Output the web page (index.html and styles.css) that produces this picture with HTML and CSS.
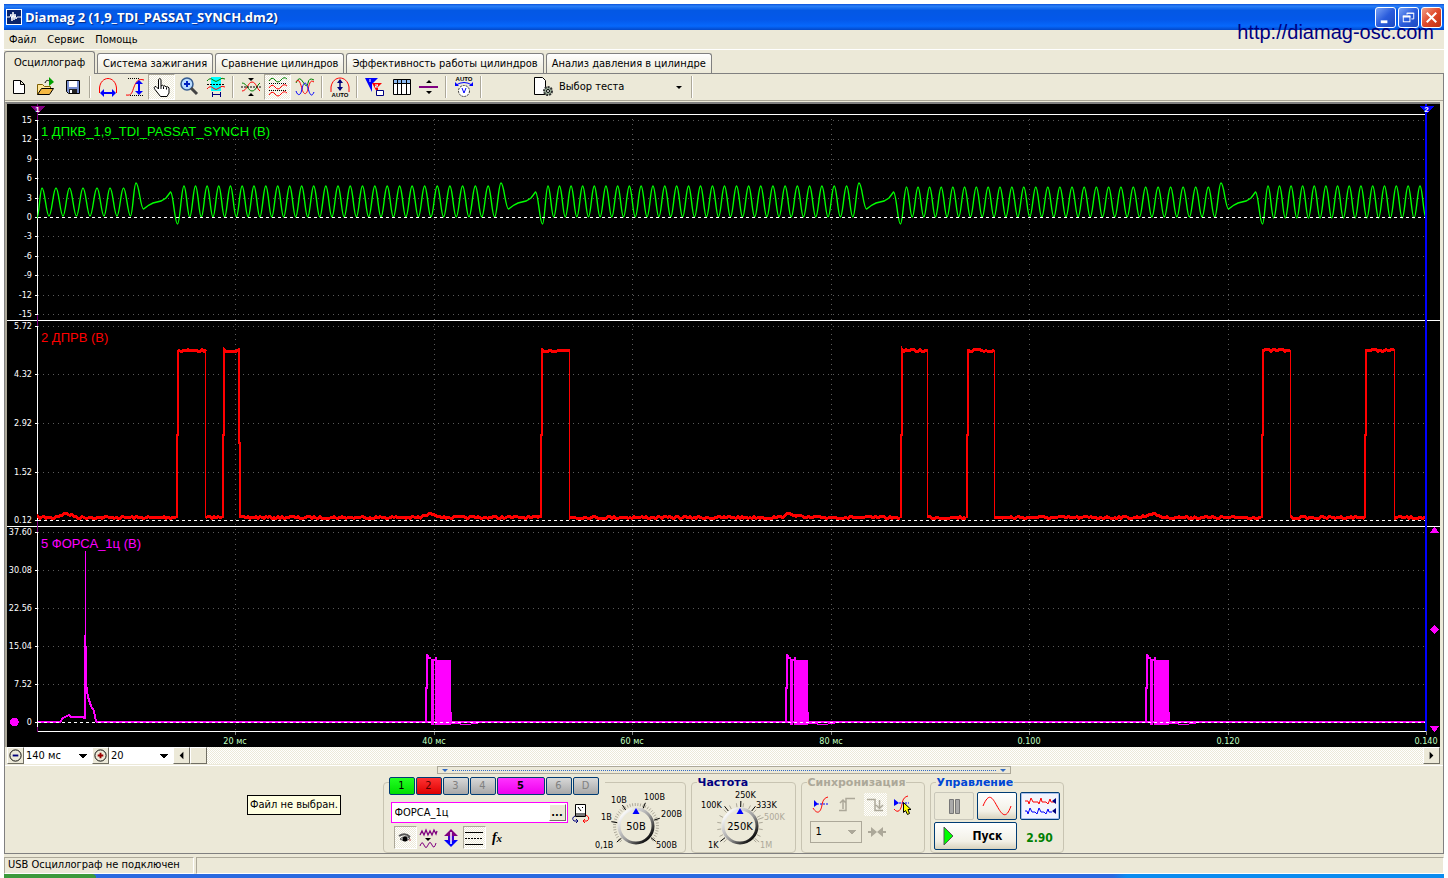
FILE: index.html
```html
<!DOCTYPE html>
<html lang="ru">
<head>
<meta charset="utf-8">
<title>Diamag 2</title>
<link rel="stylesheet" href="styles.css">
</head>
<body>
<div class="window">
  <header class="titlebar">
    <svg class="app-icon" viewBox="0 0 16 16"><rect width="16" height="16" fill="#fff"/><rect x="1" y="1" width="14" height="14" fill="#0a246a"/><path d="M1 8h3l1-3 1 7 1-9 1 8 1-6 1 5 1-2h4" fill="none" stroke="#fff"/></svg>
    <h1 class="title">Diamag 2 (1,9_TDI_PASSAT_SYNCH.dm2)</h1>
    <div class="caption-buttons">
      <button class="cap" aria-label="Свернуть"><svg viewBox="0 0 20 20"><path d="M5 14.5h7" stroke="#fff" stroke-width="3"/></svg></button>
      <button class="cap" aria-label="Развернуть"><svg viewBox="0 0 20 20" fill="none" stroke="#fff"><path d="M8.500 7V5.500h7v6H13M8 5.500h8"/><rect x="4.500" y="8.500" width="7" height="6"/><path d="M4 9h8" stroke-width="2"/></svg></button>
      <button class="cap cap-close" aria-label="Закрыть"><svg viewBox="0 0 20 20"><path d="M5 5l10 10M15 5L5 15" stroke="#fff" stroke-width="2.200"/></svg></button>
    </div>
    <a class="site" href="#">http://diamag-osc.com</a>
  </header>

  <nav class="menubar">
    <button>Файл</button><button>Сервис</button><button>Помощь</button>
  </nav>

  <div class="tabs" role="tablist">
    <button class="tab active" role="tab" aria-selected="true">Осциллограф</button>
    <button class="tab" role="tab">Система зажигания</button>
    <button class="tab" role="tab">Сравнение цилиндров</button>
    <button class="tab" role="tab">Эффективность работы цилиндров</button>
    <button class="tab" role="tab">Анализ давления в цилиндре</button>
  </div>

  <main class="page">
    <div class="toolbar">
      <button class="tool" aria-label="Новый"><svg viewBox="0 0 20 20"><path d="M4.500 3.500h7l4 4v9h-11zM11.500 3.500v4h4" fill="#fff" stroke="#000"/></svg></button>
      <button class="tool" aria-label="Открыть"><svg viewBox="0 0 20 20"><path d="M1.500 17.500v-10h5l2 2h6v3" fill="#ffe79a" stroke="#806000"/><path d="M1.500 17.500l4-6h12l-4 6z" fill="#f5b942" stroke="#000"/><path d="M9 6c1-3 3-3 4-2" fill="none" stroke="#000"/><path d="M13 0l5 5-5 4z" fill="#00a000"/></svg></button>
      <button class="tool" aria-label="Сохранить"><svg viewBox="0 0 20 20"><path d="M3.500 3.500h13v13h-11l-2-2z" fill="#7a8fd0" stroke="#000"/><path d="M6 4h8v6H6z" fill="#fff"/><path d="M6 12h8v4H6z" fill="#222"/><path d="M7 13h2v3H7z" fill="#fff"/></svg></button>
      <span class="sep"></span>
      <button class="tool" aria-label="Период"><svg viewBox="0 0 20 20" fill="none"><path d="M1.500 16V11C2 5 6 1.500 10 1.500S18 5 18.500 11v5" stroke="red"/><path d="M4 16h12" stroke="#00f" stroke-width="2"/><path d="M6 12v8l-4-4zM14 12v8l4-4z" fill="#00f"/></svg></button>
      <button class="tool" aria-label="Амплитуда"><svg viewBox="0 0 20 20" fill="none"><path d="M1 18c6 1 6-3 8-8s4-9 10-7" stroke="red"/><path d="M3 1.500h12M5 18.500h13" stroke="#000" stroke-dasharray="1 1"/><path d="M14 5v11" stroke="#00f" stroke-width="2"/><path d="M10 7h8l-4-4zM10 14h8l-4 4z" fill="#00f"/></svg></button>
      <button class="tool pressed" aria-label="Перемещение"><svg viewBox="0 0 20 20"><path d="M6.500 12V2.500q1.500-2 2.500 0V9q1.500-1.500 2.500 0 1.500-1 2.500 1 2-1 3 1v5l-2 3.500H8.500L3 12.500q-2-3 1-3z" fill="#fff" stroke="#000"/><path d="M9 9v3M11.500 9.500V12M14.500 10.500v2" stroke="#000"/></svg></button>
      <button class="tool" aria-label="Масштаб"><svg viewBox="0 0 20 20"><circle cx="8" cy="7" r="6" fill="#b8dcff" stroke="#345a90" stroke-width="1.500"/><path d="M5 7h6M8 4v6" stroke="#0020c0" stroke-width="2"/><path d="M12 11l6 6" stroke="#444" stroke-width="3"/></svg></button>
      <button class="tool" aria-label="Участок"><svg viewBox="0 0 20 20" fill="none"><path d="M5 0h10v14H5z" fill="#0ff"/><path d="M1 4q3-4 6-1t6 0 6-1" stroke="green"/><path d="M1 12q3-4 6-1t6 0 6-1" stroke="red"/><path d="M1 7.500h18" stroke="#000" stroke-dasharray="2 1"/><path d="M6 17.500h9M6.500 15v5M14.500 15v5" stroke="#00007a"/></svg></button>
      <span class="sep"></span>
      <button class="tool" aria-label="Сжать"><svg viewBox="0 0 20 20" fill="none"><path d="M1 14C6 14 7 5 11 5s5 7 8 9" stroke="red"/><path d="M1 6c5 0 6 8 10 8s5-6 8-8" stroke="green"/><path d="M0 10h20" stroke="#000" stroke-dasharray="2 1"/><path d="M7 1h6l-3 3zM7 19h6l-3-3z" fill="#000"/></svg></button>
      <button class="tool pressed" aria-label="Разделить"><svg viewBox="0 0 20 20" fill="none"><path d="M1 4q3-5 6-1t6 0 6-1" stroke="green"/><path d="M1 11q3-5 6-1t6 0 6-1M1 18q3-5 6-1t6 0 6-1" stroke="red"/><path d="M1 6.500h18M1 13.500h18" stroke="#000" stroke-dasharray="1 1"/></svg></button>
      <button class="tool" aria-label="Совместить"><svg viewBox="0 0 20 20" fill="none"><path d="M1 6Q4-2 8 5t5 1 6-3" stroke="green"/><path d="M1 5C4 0 6 8 7 12s4 8 6 0 3-9 6-7" stroke="red"/><path d="M1 14c2 6 5 4 6-2s4-9 6-1 4 9 6 4" stroke="#00f"/></svg></button>
      <span class="sep"></span>
      <button class="tool" aria-label="Авто"><svg viewBox="0 0 20 20"><path d="M1 15V10C2 4 6 1 10 1s8 3 9 9v5" fill="none" stroke="red"/><path d="M10 3v10" stroke="#00007a" stroke-width="1.500"/><path d="M7 6l3-4 3 4zM7 10h6l-3 4z" fill="#00007a"/><text class="micro" x="10" y="20">AUTO</text></svg></button>
      <span class="sep"></span>
      <button class="tool" aria-label="Маркеры"><svg viewBox="0 0 20 20"><path d="M0 1h13L7 7v8z" fill="#00f"/><path d="M7 6h10l-4 4v7z" fill="red"/><path d="M5 2v3M10 8h3l-3 2h3" stroke="#fff"/><path d="M11.500 13.500h7v5h-7z" fill="#fff" stroke="#000080"/></svg></button>
      <button class="tool" aria-label="Таблица"><svg viewBox="0 0 20 20"><path d="M1.500 2.500h17v15h-17z" fill="#fff" stroke="#000"/><path d="M2 3h16v3H2z" fill="#8ab8f0"/><path d="M1 6.500h18M5.500 3v14M9.500 3v14M14.500 3v14" stroke="#000"/></svg></button>
      <button class="tool" aria-label="Уровень"><svg viewBox="0 0 20 20"><path d="M0 10h19" stroke="purple" stroke-width="2"/><path d="M7 6h6l-3-3zM7 14h6l-3 3z"/></svg></button>
      <span class="sep"></span>
      <button class="tool" aria-label="Автонастройка"><svg viewBox="0 0 20 20"><text class="micro" x="10" y="4">AUTO</text><path d="M2 8q8-5 16 0" fill="none" stroke="#00f"/><path d="M1 5v4h4zM19 5v4h-4z" fill="#00f"/><circle cx="10" cy="14" r="5.500" fill="#fff" stroke="#333" stroke-dasharray="2 1"/><path d="M8 11l2 5 2-5" fill="none" stroke="#00f"/></svg></button>
      <span class="sep"></span>
      <button class="test-select"><svg viewBox="0 0 20 20"><path d="M.5.500h8l3 3v14H.500z" fill="#fff" stroke="#000"/><circle cx="14" cy="14" r="4" fill="#9bb09b" stroke="#333" stroke-width="2" stroke-dasharray="2 1"/><circle cx="14" cy="14" r="1.500" fill="#fff" stroke="#000"/></svg><span>Выбор теста</span><i class="caret"></i></button>
      <span class="sep"></span>
    </div>

    <svg id="scope" class="scope" viewBox="7 104 1433 643" role="img" aria-label="Осциллограммы"></svg>

    <div class="scroll-row">
      <button class="round-btn" aria-label="Меньше"><svg viewBox="0 0 16 16"><circle cx="8" cy="8" r="6" fill="none" stroke="#000"/><path d="M5 8h6" stroke="#00007a" stroke-width="2"/></svg></button>
      <select class="span-select" aria-label="Развёртка"><option>140 мс</option></select>
      <button class="round-btn" aria-label="Больше"><svg viewBox="0 0 16 16"><circle cx="8" cy="8" r="6" fill="none" stroke="#000"/><path d="M5 8h6M8 5v6" stroke="#900" stroke-width="2"/></svg></button>
      <select class="zoom-select" aria-label="Увеличение"><option>20</option></select>
      <button class="sb" aria-label="Влево"><svg viewBox="0 0 16 16"><path d="M10 4v8L6 8z"/></svg></button>
      <button class="sb" aria-label="Ползунок"></button>
      <span class="track"></span>
      <button class="sb" aria-label="Вправо"><svg viewBox="0 0 16 16"><path d="M6 4v8l4-4z"/></svg></button>
    </div>

    <section class="controls">
      <div class="collapse"><i></i><span></span><i></i></div>
      <div class="tooltip" role="tooltip">Файл не выбран.</div>
      <div class="groups">
        <div class="group group-channel">
          <div class="channel-left">
            <div class="channels">
              <button class="ch green">1</button><button class="ch red">2</button><button class="ch">3</button><button class="ch">4</button><button class="ch magenta">5</button><button class="ch">6</button><button class="ch">D</button>
            </div>
            <div class="name-row">
              <div class="name-box"><input aria-label="Имя канала" value="ФОРСА_1ц"><button aria-label="Выбрать датчик">...</button></div>
              <svg class="swap" viewBox="0 0 20 20"><path d="M4.500 1.500h10v12h-10z" fill="#fff" stroke="#000"/><path d="M5 10h9v3H5z" fill="#777"/><path d="M7 4l3 4M11 4l1 1" stroke="#000"/><path d="M4 13q-4 2-1 5h4M5 16l2 2-2 2" fill="none" stroke="#00007a"/><path d="M15 12q5 3 1 6h-4M14 16l-2 2 2 2" fill="none" stroke="red"/></svg>
            </div>
            <div class="icon-row">
              <button class="mini pressed" aria-label="Показать"><svg viewBox="0 0 20 20"><path d="M4 8q6-4 11 1" fill="none" stroke="#555" stroke-width="2"/><path d="M5 11q4-4 10-1-4 5-10 1" fill="#ddd" stroke="#555"/><circle cx="10" cy="11" r="2.500"/><path d="M14 12h2" stroke="#b55"/></svg></button>
              <button class="mini" aria-label="Фильтр"><svg viewBox="0 0 20 20" fill="none" stroke="purple"><path d="M2 7l2-4 2 4 2-5 2 5 2-4 2 4 2-5 2 4 1-3" stroke-width="1.300"/><path d="M2 18q2-6 4-1t4 0 4 0 4-2"/><path d="M7 10h6l-3 3z" fill="#000" stroke="none"/></svg></button>
              <button class="mini" aria-label="Смещение"><svg viewBox="0 0 20 20"><path d="M10 1l7 7h-4v4H7V8H3z" fill="purple"/><path d="M3 12h14l-7 7z" fill="#00f"/><path d="M7 8h6v5H7z" fill="#40c"/><path d="M10 4v12" stroke="#fff" stroke-width="1.500"/></svg></button>
              <button class="mini pressed" aria-label="Линии"><svg viewBox="0 0 20 20"><path d="M1 4.500h18M1 16.500h18" stroke="#000"/><path d="M1 10.500h18" stroke="#000" stroke-dasharray="2 1"/></svg></button>
              <button class="mini fx" aria-label="Функция"><b>f<small>x</small></b></button>
            </div>
          </div>
          <svg class="knob" id="knobV" viewBox="594 782 91 69"></svg>
        </div>

        <div class="group group-freq">
          <h2 class="legend navy">Частота</h2>
          <svg class="knob" id="knobF" viewBox="694 782 98 69"></svg>
        </div>

        <div class="group group-sync">
          <h2 class="legend dim">Синхронизация</h2>
          <div class="sync-icons">
            <button class="mini" aria-label="Запуск"><svg viewBox="0 0 20 20" fill="none"><path d="M2 13c5 8 8 3 9-3s3-7 6-8" stroke="red"/><path d="M3 9h14" stroke="#00f" stroke-dasharray="2 1"/><path d="M3 5v7l4-3z" fill="#00f"/></svg></button>
            <button class="mini" aria-label="Фронт" disabled><svg viewBox="0 0 20 20" fill="none" stroke="#aca899" stroke-width="1.500"><path d="M1 15.500h7v-12h9M11 3.500h6M5 14V6M2 8l3-3 3 3"/></svg></button>
            <button class="mini checked" aria-label="Спад" disabled><svg viewBox="0 0 20 20" fill="none" stroke="#aca899" stroke-width="1.500"><path d="M2 4.500h8v11h8M14.500 5v8M11 10l3.500 3.500L18 10"/></svg></button>
            <button class="mini" aria-label="Указать"><svg viewBox="0 0 20 20" fill="none"><path d="M2 14c4 5 7 1 8-5s3-7 6-8" stroke="red"/><path d="M4 8h13" stroke="#00f" stroke-dasharray="2 1"/><path d="M2 4v7l5-3z" fill="#00f"/><path d="M11.500 7.500v10l2-2 2 4 2-1-1.500-4h3z" fill="#ff0" stroke="#000"/></svg></button>
          </div>
          <div class="sync-row">
            <select class="sync-select" aria-label="Канал синхронизации"><option>1</option></select>
            <svg class="join" viewBox="0 0 20 20"><path d="M1 9h3V5l6 5-6 5v-4H1zM19 9h-3V5l-6 5 6 5v-4h3z" fill="#aca899"/></svg>
          </div>
        </div>

        <div class="group group-run">
          <h2 class="legend royal">Управление</h2>
          <div class="run-grid">
            <button class="xp off" aria-label="Пауза"><svg viewBox="0 0 36 26"><path d="M13.500 6.500h4v14h-4zM19.500 6.500h4v14h-4z" fill="#aaa" stroke="#777"/></svg></button>
            <button class="xp" aria-label="Однократно"><svg viewBox="0 0 36 26"><path d="M4 13C10-1 13 4 18 13s9 14 14 0" fill="none" stroke="red"/></svg></button>
            <button class="xp cold" aria-label="Запись"><svg viewBox="0 0 36 26" fill="none"><path d="M3 8h3l1 3 2-6 2 4h5l1 2 2-6 1 4h4l2 2 2-5 1 3h3" stroke="red"/><path d="M3 18h2l1 3 2-6 2 4h3l2 2 2-6 2 4h3l2 2 2-5 1 3h3" stroke="#00f"/><path d="M34 5v6l-4-3zM34 15v6l-4-3z" fill="#00007a"/></svg></button>
            <button class="xp start"><svg viewBox="0 0 12 20"><path d="M1 1v18l9-9z" fill="#0f0" stroke="#555" stroke-width="1"/></svg><span>Пуск</span></button>
            <output class="value">2.90</output>
          </div>
        </div>
      </div>
    </section>
  </main>

  <footer class="statusbar"><div class="status-main">USB Осциллограф не подключен</div><div class="status-rest"></div></footer>
</div>
<div class="taskbar"><span></span></div>
<script src="scope.js"></script>
</body>
</html>
```

FILE: scope.js
```js
const out = [];
const line = (x1, y1, x2, y2, cls) =>
  out.push(`<line x1="${x1}" y1="${y1}" x2="${x2}" y2="${y2}" class="${cls}"/>`);
const text = (x, y, s, cls) => out.push(`<text x="${x}" y="${y}" class="${cls}">${s}</text>`);
const path = (d, cls) => out.push(`<path d="${d}" class="${cls}"/>`);

let seed = 7;
const rnd = () => (seed = (seed * 16807) % 2147483647) / 2147483647;

// Grid, scales and separators
const panels = [
  { ys: [120, 139, 159, 178, 198, 217, 236, 256, 275, 295, 314], labels: ['15', '12', '9', '6', '3', '0', '-3', '-6', '-9', '-12', '-15'], zero: 217 },
  { ys: [326, 374, 423, 472, 520], labels: ['5.72', '4.32', '2.92', '1.52', '0.12'], zero: 520 },
  { ys: [532, 570, 608, 646, 684, 722], labels: ['37.60', '30.08', '22.56', '15.04', '7.52', '0'], zero: 722 }
];
for (const p of panels) {
  p.ys.forEach((y, i) => {
    if (y !== p.zero) line(38, y + 0.5, 1426, y + 0.5, 'grid');
    line(35, y + 0.5, 38, y + 0.5, 'white');
    text(32, y + 3, p.labels[i], 'scale');
  });
}
const times = [[235, '20 мс'], [434, '40 мс'], [632, '60 мс'], [831, '80 мс'], [1029, '0.100'], [1228, '0.120'], [1426, '0.140']];
for (const [x, s] of times) {
  line(x + 0.5, 119, x + 0.5, 730, 'grid');
  line(x + 0.5, 731, x + 0.5, 735, 'tick');
  text(x, 744, s, 'time');
}
line(38, 114.5, 1426, 114.5, 'white');
line(7, 320.5, 1440, 320.5, 'white');
line(7, 526.5, 1440, 526.5, 'white');
line(38, 731.5, 1426, 731.5, 'white');
line(37.5, 114, 37.5, 732, 'white');
for (const [a, b] of [[104, 120], [315, 326], [521, 532], [727, 732]]) line(37.5, a, 37.5, b, 'purple');

// Crankshaft sensor: alternating peaks and troughs joined by half-cosines
const pts = [[37, 218]];
const teeth = (x0, x1, n, top, bottom, last) => {
  const c = (x1 - x0 - 11.5 * n) / (n * n);
  let prev = null;
  for (let k = 0; k <= n; k++) {
    const x = x0 + 11.5 * k + c * k * k;
    if (prev !== null) pts.push([(x + prev) / 2, bottom]);
    pts.push([x, k === n && last ? last : top]);
    prev = x;
  }
};
const gap = (x) => pts.push([x + 7.5, 209], [x + 13, 205], [x + 17, 203], [x + 25, 201], [x + 30, 198], [x + 34.5, 192], [x + 41.5, 224]);
[42, 56, 69.5, 83, 97, 110, 123.5].forEach(x => pts.push([x, 188], [x + 7, 216]));
pts.push([136, 183]);
gap(136);
teeth(184, 501, 26, 186, 217, 183);
gap(501);
teeth(548, 859, 26, 186, 217, 183);
gap(859);
teeth(906.5, 1221, 26, 187, 217, 183);
gap(1221);
teeth(1268, 1420, 13, 186, 218);
pts.push([1426, 218]);
let d = `M${pts[0][0]} ${pts[0][1]}`;
for (let i = 1; i < pts.length; i++) {
  const [xa, ya] = pts[i - 1], [xb, yb] = pts[i];
  d += Math.abs(yb - ya) < 7
    ? `L${xb} ${yb}`
    : `C${xa + (xb - xa) * 0.4} ${ya} ${xb - (xb - xa) * 0.4} ${yb} ${xb} ${yb}`;
}
path(d, 'green-wave');

// Camshaft sensor: noisy rails with rectangular pulses
const rail = (a, b, y) => {
  let s = `M${a} ${y}`;
  for (let x = a; x <= b; x += 2) {
    let bump = 0;
    for (const m of [66, 432, 791, 1152]) if (y > 400 && Math.abs(x - m) < 12) bump = -4 * (1 - Math.abs(x - m) / 12);
    s += `L${x} ${(y + bump + (rnd() - 0.5) * 2.4).toFixed(1)}`;
  }
  path(s, 'red-rail');
};
const pulses = [[178, 206], [224, 240], [542, 570], [902, 928], [968, 995], [1263, 1291], [1366, 1395]];
let from = 38;
pulses.forEach(([a, b], i) => {
  rail(from, a - 1, 517.5);
  rail(a, b, 350.5);
  path(`M${a - 1} 518V435H${a}V350`, 'red-edge');
  path(i === 1 ? `M${b - 1} 350V443H${b}V518` : `M${b - 0.5} 350V518`, i === 1 ? 'red-edge' : 'red-thin');
  from = b;
});
rail(from, 1426, 517.5);

// Injector current
path('M38 722H60L63 718l4-2 2-1 2 2 13 0V719', 'mag-line');
path('M85 719V635', 'mag-line');
path('M85.500 635V551', 'mag-thin');
path('M86 646V684L88 697l3 9 3 5 2 11', 'mag-line');
path('M96 722H1426', 'mag-line');
for (const [x, blk, end] of [[426, 432, 451], [786, 791, 808], [1146, 1151, 1169]]) {
  path(`M${x} 721V688H${x + 1}V654L${x + 3} 658H${x + 5}`, 'mag-line');
  out.push(`<rect x="${blk - 1}" y="659" width="3" height="66" class="mag-fill"/>`);
  out.push(`<rect x="${blk + 3}" y="660" width="${end - blk - 3}" height="65" class="mag-fill"/>`);
  path(`M${blk} 660H${blk + 4}V657`, 'mag-line');
  path(`M${end} 712V723.500H${end + 9}V724.500H${end + 17}L${end + 30} 722.500`, 'mag-thin');
}
for (const p of panels) line(38, p.zero + 0.5, 1426, p.zero + 0.5, 'zero');

text(41, 136, '1 ДПКВ_1,9_TDI_PASSAT_SYNCH (В)', 'name n1');
text(41, 342, '2 ДПРВ (В)', 'name n2');
text(41, 548, '5 ФОРСА_1ц (В)', 'name n5');

// Cursors and level handles
path('M30 106h15l-7 8z', 'purple-fill');
line(1426, 104, 1426, 731, 'cursor');
path('M1419 106h15l-7 8z', 'blue-fill');
text(37.5, 112, '1', 'flag');
text(1426.5, 112, '2', 'flag');
path('M1429.500 533h10l-5-6zM1429.500 726h10l-5 6zM1434.500 625l4.500 4.500-4.500 4.500-4.500-4.500z', 'mag-fill');
out.push('<circle cx="14.500" cy="722" r="4.300" class="mag-fill"/>');
document.getElementById('scope').innerHTML = out.join('');

// Rotary knobs
function knob(id, cx, cy, value, labels, step, rIn, rOut) {
  let s = `<defs><linearGradient id="${id}g" x1="0" y1="0" x2="1" y2="1"><stop offset=".1" stop-color="#fff"/><stop offset=".55" stop-color="#999"/><stop offset=".9" stop-color="#000"/></linearGradient></defs>`;
  for (let a = -225; a <= 45; a += step) {
    const r = a * Math.PI / 180, c = Math.cos(r), n = Math.sin(r);
    s += `<path d="M${cx + c * rIn} ${cy + n * rIn}L${cx + c * rOut} ${cy + n * rOut}" stroke="#aca899"/>`;
  }
  for (const [t, x, y, a, off] of labels) {
    const r = a * Math.PI / 180, c = Math.cos(r), n = Math.sin(r);
    s += `<path d="M${cx + c * 19} ${cy + n * 19}L${cx + c * 25} ${cy + n * 25}" stroke="${off ? '#aca899' : '#000'}"/>`;
    s += `<text x="${x}" y="${y}" class="knob-label${off ? ' off' : ''}">${t}</text>`;
  }
  s += `<circle cx="${cx}" cy="${cy}" r="17" fill="#ece9d8" stroke="url(#${id}g)" stroke-width="3"/>`;
  s += `<path d="M${cx - 3.5} ${cy - 12}h7l-3.500-6z" fill="#00f"/>`;
  s += `<text x="${cx}" y="${cy + 4}" class="knob-value">${value}</text>`;
  document.getElementById(id).innerHTML = s;
}
knob('knobV', 636, 825, '50В', [['0,1В', 595, 847, 140], ['1В', 601, 819, 190], ['10В', 611, 802, 237], ['100В', 644, 799, 292], ['200В', 661, 816, 342], ['500В', 656, 847, 38]], 7, 20, 23);
knob('knobF', 740, 825, '250K', [['1K', 708, 847, 142], ['100K', 701, 807, 232], ['250K', 735, 797, 272], ['333K', 756, 807, 308], ['500K', 764, 819, 340, 1], ['1M', 760, 847, 40, 1]], 18, 19, 23);
```

FILE: styles.css
```css
* { box-sizing: border-box; }

body {
  margin: 0;
  background: #fff;
  color: #000;
  font: 11px/14px "DejaVu Sans Condensed", "Noto Sans", sans-serif;
}

button, input, select {
  font: inherit;
  color: inherit;
  margin: 0;
  padding: 0;
  border: 0;
  background: none;
  border-radius: 0;
}

svg { display: block; }

.window { margin: 4px 4px 0; background: #ece9d8; }

/* Title bar */
.titlebar {
  position: relative;
  display: flex;
  align-items: center;
  height: 26px;
  padding: 0 2px;
  background: linear-gradient(#0a50d8, #2a80f8 8%, #0458e4 25%, #0458ea 60%, #0668fc 85%, #0348c8);
}
.app-icon { width: 16px; height: 16px; }
.title {
  flex: 1;
  margin: 0 0 0 3px;
  color: #fff;
  font: bold 13px/18px "Open Sans", sans-serif;
  text-shadow: 1px 1px 1px #0a2a80;
}
.caption-buttons { display: flex; gap: 2px; }
.cap {
  width: 21px;
  height: 21px;
  border: 1px solid #fff;
  border-radius: 3px;
  background: linear-gradient(135deg, #7aa2f5, #2a5cdc 50%, #1c49c0);
}
.cap-close { background: linear-gradient(135deg, #f0a088, #e0482a 50%, #c03010); }
.site {
  position: absolute;
  right: 10px;
  top: 17px;
  color: #000080;
  font: 20px/22px "Liberation Sans", Arial, sans-serif;
  text-decoration: none;
}

/* Menu and tabs */
.menubar {
  display: flex;
  gap: 11px;
  height: 20px;
  padding: 1px 5px 0;
  border-bottom: 1px solid #fff;
}
.tabs {
  display: flex;
  align-items: flex-end;
  gap: 2px;
  height: 24px;
  border-bottom: 1px solid #808080;
}
.tab {
  height: 20px;
  padding: 0 5px;
  border: 1px solid #808080;
  border-bottom: 0;
  border-radius: 3px 3px 0 0;
  background: linear-gradient(#fff, #ece9d8);
  white-space: nowrap;
}
.tab.active {
  height: 23px;
  margin-bottom: -1px;
  padding: 0 9px;
  background: #ece9d8;
}

/* Toolbar */
.page { border: solid #808080; border-width: 0 1px 1px; }
.toolbar {
  display: flex;
  align-items: center;
  height: 27px;
  border-bottom: 1px solid #aca899;
}
.tool {
  display: grid;
  place-items: center;
  width: 27px;
  height: 26px;
}
.tool svg, .mini svg { width: 20px; height: 20px; }
.pressed, .checked {
  background: repeating-conic-gradient(#fff 0 25%, #ece9d8 0 50%) 0 0 / 2px 2px;
}
.pressed {
  border: 1px solid;
  border-color: #aca899 #fff #fff #aca899;
}
.sep {
  width: 8px;
  height: 22px;
  background: linear-gradient(90deg, transparent 3px, #aca899 3px 4px, #fff 4px 5px, transparent 5px);
}
.micro { font: bold 6px "Liberation Sans", sans-serif; text-anchor: middle; }
.test-select {
  display: flex;
  align-items: center;
  width: 154px;
  height: 24px;
  margin-left: 49px;
  padding-right: 6px;
}
.test-select svg { width: 20px; height: 20px; margin-right: 5px; }
.test-select span { flex: 1; text-align: left; }
.caret {
  border: solid transparent;
  border-width: 3px 3px 0;
  border-top-color: #000;
}

/* Oscillogram */
.scope {
  width: calc(100% - 3px);
  height: auto;
  border-left: 2px solid #aca899;
  border-top: 2px solid #808080;
  margin-top: 1px;
  background: #000;
  shape-rendering: crispEdges;
}
.scope line { stroke-width: 1; }
.scope path { fill: none; }
.scope .grid { stroke: #5a5a5a; stroke-dasharray: 1 4; }
.scope .zero { stroke: #fff; stroke-dasharray: 3 3; }
.scope .white { stroke: #fff; }
.scope .tick { stroke: #808080; }
.scope .purple { stroke: #800080; }
.scope .cursor { stroke: #00f; stroke-width: 2; }
.scope .green-wave { stroke: #0f0; stroke-width: 1.4; shape-rendering: geometricPrecision; }
.scope .red-rail { stroke: #f00; stroke-width: 3; }
.scope .red-edge { stroke: #f00; stroke-width: 2; }
.scope .red-thin { stroke: #f00; stroke-width: 1; }
.scope .mag-line { stroke: #f0f; stroke-width: 2; }
.scope .mag-thin { stroke: #f0f; stroke-width: 1; }
.scope .mag-fill { fill: #f0f; }
.scope .purple-fill { fill: #800080; }
.scope .blue-fill { fill: #00f; }
.scale { fill: #fff; font-size: 9px; text-anchor: end; }
.time { fill: #c0ffc0; font-size: 9px; text-anchor: middle; }
.flag { fill: #fff; font: bold 8px "Liberation Sans", sans-serif; text-anchor: middle; }
.name { font: 13px "Liberation Sans", Arial, sans-serif; }
.n1 { fill: #0f0; }
.n2 { fill: #f00; }
.n5 { fill: #f0f; }

/* Time scale and scrollbar */
.scroll-row {
  display: flex;
  height: 17px;
  margin: 0 3px 1px 2px;
}
.round-btn, .sb {
  width: 17px;
  height: 17px;
  border: 1px solid;
  border-color: #fff #716f64 #716f64 #fff;
  background: #ece9d8;
}
.round-btn svg, .sb svg { width: 15px; height: 15px; }
.scroll-row select, .sync-select {
  appearance: none;
  background-color: #fff;
  background-image: conic-gradient(from -45deg at 50% 100%, #000 90deg, transparent 0);
  background-size: 8px 4px;
  background-position: right 5px center;
  background-repeat: no-repeat;
}
.scroll-row select { padding-left: 2px; }
.span-select { width: 68px; }
.zoom-select { width: 64px; }
.track {
  flex: 1;
  background: repeating-conic-gradient(#fff 0 25%, #ece9d8 0 50%) 0 0 / 2px 2px;
}

/* Bottom controls */
.controls {
  position: relative;
  border-top: 1px solid #fff;
}
.collapse {
  display: flex;
  align-items: center;
  gap: 4px;
  width: 574px;
  height: 8px;
  margin: 0 auto;
  padding: 0 4px;
  border: 1px solid #aca899;
}
.collapse span { flex: 1; border-top: 1px dotted #316ac5; }
.collapse i {
  border: solid transparent;
  border-width: 3px 3px 0;
  border-top-color: #316ac5;
}
.tooltip {
  position: absolute;
  left: 242px;
  top: 29px;
  padding: 2px;
  border: 1px solid #000;
  background: #ffffe1;
}
.groups {
  display: flex;
  justify-content: center;
  gap: 5px;
  margin-top: 8px;
  padding-right: 2px;
}
.group {
  position: relative;
  height: 71px;
  border: 1px solid #c8c4b2;
  border-radius: 4px;
}
.legend {
  position: absolute;
  left: 5px;
  top: -7px;
  margin: 0;
  padding: 0 1px;
  background: #ece9d8;
  font: bold 11px/14px "DejaVu Sans", sans-serif;
}
.navy { color: #000080; }
.dim { color: #aca899; }
.royal { color: #0046d5; }

.group-channel { display: flex; width: 303px; padding-left: 5px; }
.channel-left { width: 205px; }
.channels {
  position: relative;
  display: flex;
  gap: 1px;
  width: 216px;
  margin-top: -6px;
  background: #ece9d8;
}
.ch {
  width: 26px;
  height: 18px;
  border: 1px solid #003c74;
  border-radius: 2px;
  background: linear-gradient(#d8d8d8, #a8a8a8);
  color: #808080;
}
.ch.green { background: linear-gradient(#2f2, #0d0); color: #000; }
.ch.red { background: linear-gradient(#f33, #d00); color: #500; }
.ch.magenta { width: 48px; background: linear-gradient(#f3f, #e0e); color: #000; font-weight: bold; }
.name-row { display: flex; align-items: center; gap: 3px; margin: 7px 0 0 2px; }
.name-box {
  display: flex;
  width: 177px;
  height: 21px;
  border: 1px solid #f0f;
  background: #fff;
}
.name-box input { flex: 1; min-width: 0; padding-left: 3px; }
.name-box button {
  width: 17px;
  margin: 1px;
  border: 1px solid;
  border-color: #fff #716f64 #716f64 #fff;
  background: #ece9d8;
  font-weight: bold;
  line-height: 8px;
}
.swap { width: 20px; height: 20px; flex: none; }
.icon-row { display: flex; margin: 3px 0 0 5px; }
.mini {
  display: grid;
  place-items: center;
  width: 23px;
  height: 23px;
}
.fx { font: italic 14px/20px "Liberation Serif", serif; }
.fx small { font-size: 11px; }
.knob { flex: none; height: 69px; }
#knobV { width: 91px; }
#knobF { width: 98px; }
.knob-label { font-size: 9px; }
.knob-label.off { fill: #aca899; }
.knob-value { font-size: 11px; text-anchor: middle; }

.group-freq { width: 105px; padding-left: 2px; }
.group-sync { width: 124px; padding: 10px 8px 0; }
.sync-icons { display: flex; gap: 4px; }
.sync-row { display: flex; align-items: center; gap: 5px; margin-top: 5px; }
.sync-select {
  width: 52px;
  height: 22px;
  padding-left: 5px;
  border: 1px solid #aca899;
  background-color: #ece9d8;
  background-image: conic-gradient(from -45deg at 50% 100%, #aca899 90deg, transparent 0);
}
.join { width: 20px; height: 20px; }
.group-run { width: 134px; padding: 9px 3px 0; }
.run-grid {
  display: grid;
  grid-template-columns: repeat(3, 40px);
  gap: 2px 3px;
}
.xp {
  display: flex;
  align-items: center;
  justify-content: center;
  height: 28px;
  border: 1px solid #003c74;
  border-radius: 2px;
  background: linear-gradient(#fff, #f2f0e6 70%, #d8d2bd);
  font: bold 12px/14px "DejaVu Sans Condensed", sans-serif;
}
.xp svg { width: 36px; height: 26px; }
.xp.off { border-color: #c9c7ba; background: #ece9d8; }
.xp.cold { background: #f2f4fc; box-shadow: inset 0 0 0 1px #a8c0f0; }
.xp.start { grid-column: span 2; justify-content: flex-start; }
.xp.start svg { width: 12px; height: 20px; margin: 0 18px 0 8px; }
.value {
  align-self: center;
  padding-top: 4px;
  text-align: center;
  color: #008000;
  font: bold 12px/14px "DejaVu Sans Condensed", sans-serif;
}

/* Status bar and the strip of the desktop taskbar */
.statusbar { display: flex; gap: 2px; padding-top: 3px; }
.status-main, .status-rest {
  height: 17px;
  padding: 0 3px;
  border: 1px solid;
  border-color: #aca899 #fff #fff #aca899;
}
.status-main { width: 190px; }
.status-rest { flex: 1; }
.taskbar {
  height: 4px;
  margin: 0 4px;
  background: linear-gradient(90deg, #2a6ae0 77%, #0a8cf0 78%);
}
.taskbar span {
  display: block;
  width: 92px;
  height: 4px;
  border-radius: 0 4px 0 0;
  background: #3c9a3c;
}
```
